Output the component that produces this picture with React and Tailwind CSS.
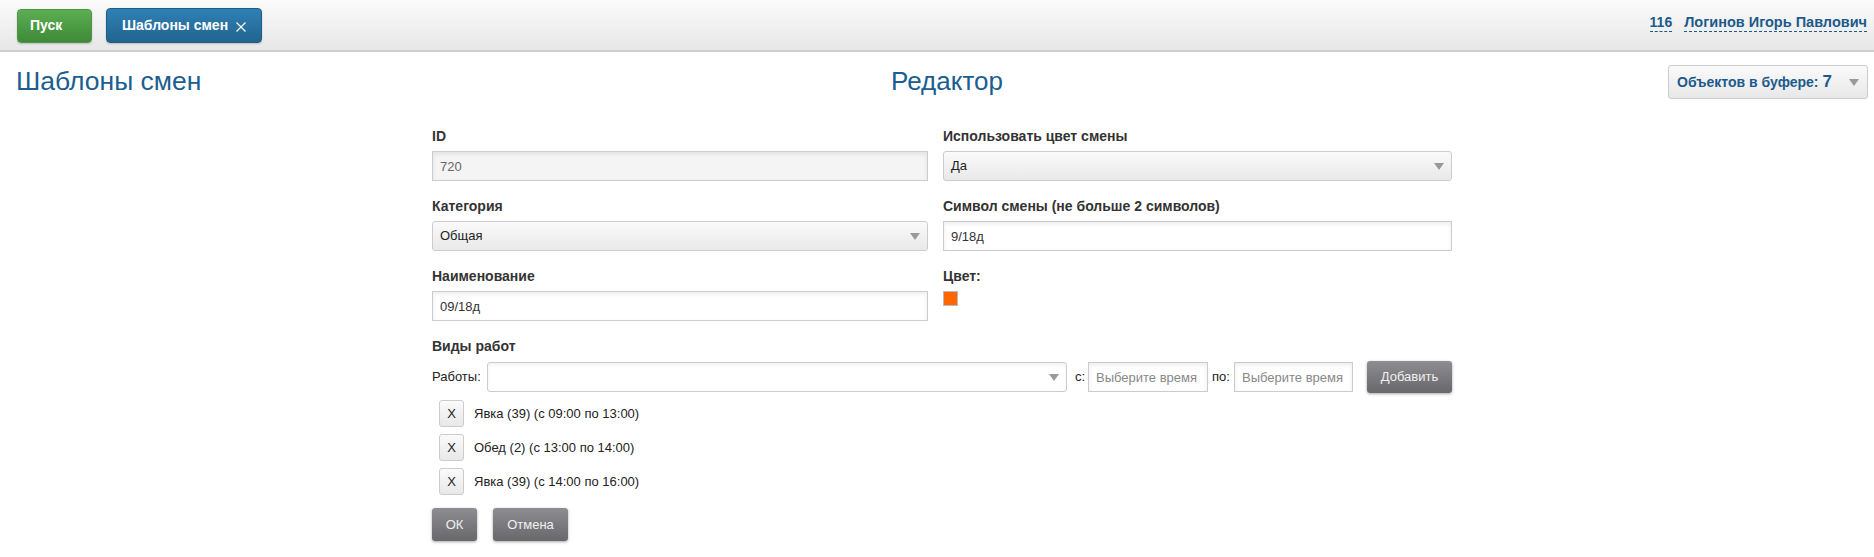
const font = { fontFamily: '"Liberation Sans", Arial, sans-serif' };

const inputCls =
  "h-[30px] shrink-0 border border-[#cccccc] px-[7px] text-[13px] text-[#333] shadow-[inset_0_2px_4px_rgba(0,0,0,0.08)] outline-none";

const Caret = () => (
  <span className="h-0 w-0 border-x-[5px] border-t-[7px] border-x-transparent border-t-[#999]" />
);

const FakeSelect = ({ value, className = "" }) => (
  <div
    className={`flex h-[30px] shrink-0 items-center justify-between rounded-[3px] border border-[#cccccc] pl-[7px] pr-[7px] text-[13px] text-[#222] ${className}`}
  >
    <span>{value}</span>
    <Caret />
  </div>
);

const Field = ({ label, children }) => (
  <div className="flex flex-col">
    <label className="mb-[5px] h-[20px] text-[14px] font-bold leading-[20px] text-[#333]">{label}</label>
    {children}
  </div>
);

const GrayButton = ({ children, className = "" }) => (
  <button
    className={`shrink-0 rounded-[3px] bg-gradient-to-b from-[#8e8e92] to-[#68686c] text-[13px] text-[#f0f0f0] shadow-[0_1px_3px_rgba(0,0,0,0.35)] ${className}`}
  >
    {children}
  </button>
);

const works = [
  "Явка (39) (с 09:00 по 13:00)",
  "Обед (2) (с 13:00 по 14:00)",
  "Явка (39) (с 14:00 по 16:00)",
];

export default function App() {
  return (
    <div className="min-h-[557px] w-full bg-white" style={font}>
      {/* top bar */}
      <div className="flex h-[52px] items-start justify-between border-b-2 border-[#cfcfcf] bg-gradient-to-b from-[#fbfbfb] to-[#e7e7e7] pl-[17px] pr-[7px]">
        <div className="flex items-center gap-[14px] pt-[8px]">
          <button className="h-[34px] w-[75px] rounded-[4px] border border-[#4c9646] bg-gradient-to-b from-[#5cae53] to-[#3e8a38] pl-[12px] text-left text-[14px] font-bold text-white shadow-[0_1px_2px_rgba(0,0,0,0.2)]">
            Пуск
          </button>
          <button className="flex h-[35px] w-[156px] items-center gap-[8px] rounded-[4px] border border-[#1f5c86] bg-gradient-to-b from-[#2f80b6] to-[#22648f] pl-[15px] text-[14px] font-bold text-white shadow-[0_1px_2px_rgba(0,0,0,0.2)]">
            Шаблоны смен
            <svg width="10" height="10" viewBox="0 0 10 10" className="mt-[3px]">
              <path d="M0.5 0.5L9.5 9.5M9.5 0.5L0.5 9.5" stroke="white" strokeWidth="1.2" />
            </svg>
          </button>
        </div>
        <div className="flex items-center gap-[12px] pt-[14px] font-bold text-[#1c5a8c]">
          <span className="border-b border-dashed border-[#1c5a8c] text-[14px] leading-[17px]">116</span>
          <span className="border-b border-dashed border-[#1c5a8c] text-[14.5px] leading-[17px]">Логинов Игорь Павлович</span>
        </div>
      </div>

      {/* title row */}
      <div className="grid grid-cols-[1fr_auto_1fr] items-start pl-[16px] pr-[6px] pt-[13px]">
        <h1 className="text-[26.5px] leading-[32px] text-[#1b5e91]">Шаблоны смен</h1>
        <h2 className="pl-[10px] text-[26px] leading-[32px] text-[#1b5e91]">Редактор</h2>
        <div className="flex justify-end">
          <div className="flex h-[34px] w-[200px] items-center justify-between rounded-[3px] border border-[#cccccc] bg-gradient-to-b from-[#fafafa] to-[#e8e8e8] pl-[8px] pr-[8px] text-[14px] font-bold text-[#1c5a8c]">
            <span>
              Объектов в буфере: <span className="text-[17px]">7</span>
            </span>
            <Caret />
          </div>
        </div>
      </div>

      {/* form */}
      <div className="ml-[432px] mt-[27px] w-[1020px]">
        <div className="grid grid-cols-[496px_509px] gap-x-[15px] gap-y-[15px]">
          <Field label="ID">
            <input className={`${inputCls} w-full bg-[#f4f4f4] text-[#666]`} defaultValue="720" readOnly />
          </Field>
          <Field label="Использовать цвет смены">
            <FakeSelect value="Да" className="bg-gradient-to-b from-[#fafafa] to-[#e9e9e9]" />
          </Field>
          <Field label="Категория">
            <FakeSelect value="Общая" className="bg-gradient-to-b from-[#fafafa] to-[#e9e9e9]" />
          </Field>
          <Field label="Символ смены (не больше 2 символов)">
            <input className={`${inputCls} w-full bg-white`} defaultValue="9/18д" />
          </Field>
          <Field label="Наименование">
            <input className={`${inputCls} w-full bg-white`} defaultValue="09/18д" />
          </Field>
          <Field label="Цвет:">
            <span className="h-[15px] w-[15px] border border-[#bbb] bg-[#ff6600]" />
          </Field>
        </div>

        <div className="mt-[15px]">
          <div className="h-[20px] text-[14px] font-bold leading-[20px] text-[#333]">Виды работ</div>
          <div className="mt-[5px] flex h-[32px] items-center text-[13px] text-[#222]">
            <span className="w-[55px] shrink-0">Работы:</span>
            <FakeSelect value="" className="w-[580px] bg-white shadow-[inset_0_2px_4px_rgba(0,0,0,0.06)]" />
            <span className="ml-[8px] w-[13px] shrink-0">с:</span>
            <input className={`${inputCls} w-[120px] bg-white placeholder:text-[#888]`} placeholder="Выберите время" />
            <span className="ml-[4px] w-[22px] shrink-0">по:</span>
            <input className={`${inputCls} w-[119px] bg-white placeholder:text-[#888]`} placeholder="Выберите время" />
            <GrayButton className="ml-[14px] h-[32px] w-[85px]">Добавить</GrayButton>
          </div>

          <div className="ml-[7px] mt-[7px] flex flex-col gap-[7px]">
            {works.map((w, i) => (
              <div key={i} className="flex items-center gap-[10px] text-[13px] text-[#222]">
                <button className="h-[27px] w-[25px] rounded-[3px] border border-[#cccccc] bg-gradient-to-b from-[#fbfbfb] to-[#e8e8e8] text-[13px] text-[#222]">
                  X
                </button>
                <span>{w}</span>
              </div>
            ))}
          </div>

          <div className="mt-[13px] flex gap-[16px]">
            <GrayButton className="h-[33px] w-[45px]">ОК</GrayButton>
            <GrayButton className="h-[33px] w-[75px]">Отмена</GrayButton>
          </div>
        </div>
      </div>
    </div>
  );
}
